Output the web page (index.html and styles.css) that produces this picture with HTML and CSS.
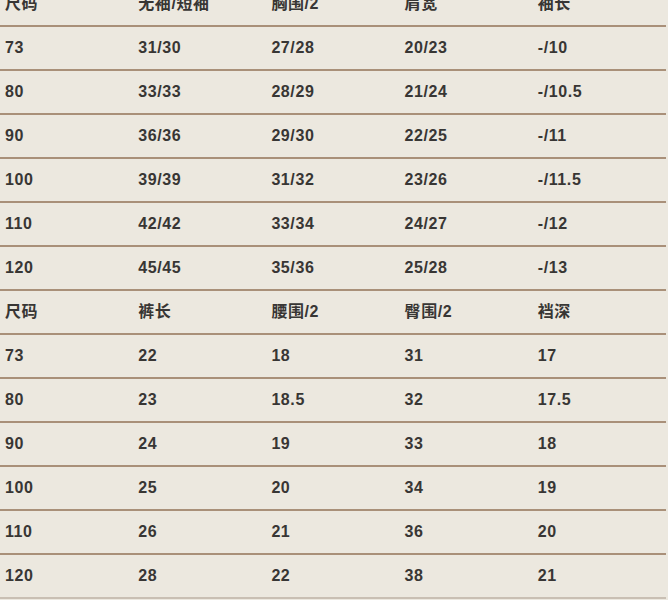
FILE: index.html
```html
<!DOCTYPE html>
<html lang="zh">
<head>
<meta charset="utf-8">
<link rel="stylesheet" href="styles.css">
</head>
<body>
<div class="sheet">
<table class="size-table">
<tbody>
<tr><td>尺码</td><td>无袖/短袖</td><td>胸围/2</td><td>肩宽</td><td>袖长</td></tr>
<tr><td>73</td><td>31/30</td><td>27/28</td><td>20/23</td><td>-/10</td></tr>
<tr><td>80</td><td>33/33</td><td>28/29</td><td>21/24</td><td>-/10.5</td></tr>
<tr><td>90</td><td>36/36</td><td>29/30</td><td>22/25</td><td>-/11</td></tr>
<tr><td>100</td><td>39/39</td><td>31/32</td><td>23/26</td><td>-/11.5</td></tr>
<tr><td>110</td><td>42/42</td><td>33/34</td><td>24/27</td><td>-/12</td></tr>
<tr><td>120</td><td>45/45</td><td>35/36</td><td>25/28</td><td>-/13</td></tr>
<tr><td>尺码</td><td>裤长</td><td>腰围/2</td><td>臀围/2</td><td>裆深</td></tr>
<tr><td>73</td><td>22</td><td>18</td><td>31</td><td>17</td></tr>
<tr><td>80</td><td>23</td><td>18.5</td><td>32</td><td>17.5</td></tr>
<tr><td>90</td><td>24</td><td>19</td><td>33</td><td>18</td></tr>
<tr><td>100</td><td>25</td><td>20</td><td>34</td><td>19</td></tr>
<tr><td>110</td><td>26</td><td>21</td><td>36</td><td>20</td></tr>
<tr class="last"><td>120</td><td>28</td><td>22</td><td>38</td><td>21</td></tr>
</tbody>
</table>
</div>
</body>
</html>
```
FILE: styles.css
```css
html, body {
  margin: 0;
  padding: 0;
  background: #ece8df;
  overflow: hidden;
}
.sheet {
  width: 666px;
  margin-top: -17px;
}
.size-table {
  width: 666px;
  border-collapse: collapse;
  table-layout: fixed;
  font-family: "Liberation Sans", "Noto Sans CJK SC", sans-serif;
  font-weight: 700;
  font-size: 16px;
  letter-spacing: 0.6px;
  color: #383634;
}
.size-table td {
  height: 42px;
  padding: 0 0 0 5px;
  vertical-align: middle;
  border-bottom: 2px solid #a99079;
  line-height: 18px;
}
.size-table tr.last td {
  border-bottom-color: #c9bfb3;
}
```
